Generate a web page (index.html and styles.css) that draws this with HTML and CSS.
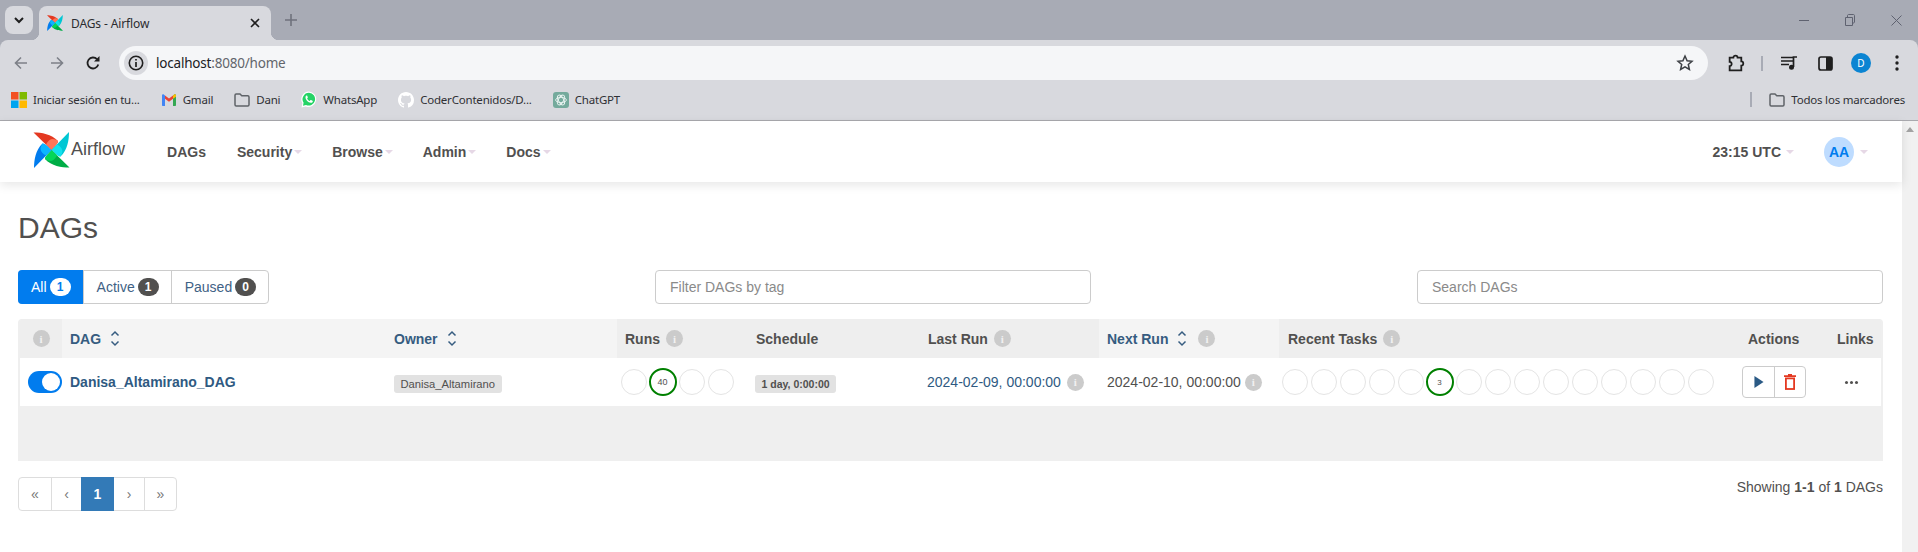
FILE: index.html
```html
<!DOCTYPE html>
<html lang="es">
<head>
<meta charset="utf-8">
<title>DAGs - Airflow</title>
<link rel="stylesheet" href="styles.css">
</head>
<body>
<svg class="defs" width="0" height="0" aria-hidden="true">
  <symbol id="pin" viewBox="0 0 36 36">
    <g id="blade-set">
      <path fill="#e43921" d="M0 0.5C8 0.5 18 2 24.5 9C24.5 12 20 15 18 18Z"/>
      <path fill="#ff7557" d="M24.5 9C20 6 16 6 12.5 12.500L18 18C20 15 24.5 12 24.5 9Z"/>
      <path fill="#00c7d4" d="M35.5 0C35.500 8 34 18 27 24.500C24 24.500 21 20 18 18Z"/>
      <path fill="#11e1ee" d="M27 24.500C30 20 30 16 23.500 12.500L18 18C21 20 24 24.500 27 24.500Z"/>
      <path fill="#00ad46" d="M36 35.500C28 35.500 18 34 11.500 27C11.500 24 16 21 18 18Z"/>
      <path fill="#04d659" d="M11.500 27C16 30 20 30 23.500 23.500L18 18C16 21 11.500 24 11.500 27Z"/>
      <path fill="#017cee" d="M0.500 36C0.500 28 2 18 9 11.500C12 11.500 15 16 18 18Z"/>
      <path fill="#0cb6ff" d="M9 11.500C6 16 6 20 12.500 23.500L18 18C15 16 12 11.500 9 11.500Z"/>
    </g>
  </symbol>
  <symbol id="folder" viewBox="0 0 16 14">
    <path fill="none" stroke="#5f6368" stroke-width="1.500" d="M1 2.200C1 1.500 1.500 1 2.200 1H6L7.800 2.800H13.800C14.500 2.800 15 3.300 15 4V11.800C15 12.500 14.500 13 13.800 13H2.200C1.500 13 1 12.500 1 11.800Z"/>
  </symbol>
  <symbol id="sort" viewBox="0 0 10 17">
    <path fill="none" stroke="currentColor" stroke-width="1.500" d="M1.500 5.500L5 2L8.500 5.500M1.500 11.500L5 15L8.500 11.500"/>
  </symbol>
</svg>

<header class="browser">
  <div class="tabstrip">
    <button class="tab-search" aria-label="Buscar pestañas">
      <svg width="12" height="12" viewBox="0 0 12 12"><path fill="none" stroke="#1f1f1f" stroke-width="2" d="M2 4L6 8L10 4"/></svg>
    </button>
    <div class="tab">
      <svg class="favicon" width="16" height="16"><use href="#pin"/></svg>
      <span class="tab-title">DAGs - Airflow</span>
      <svg class="tab-close" width="10" height="10" viewBox="0 0 10 10"><path stroke="#1f1f1f" stroke-width="1.600" d="M1 1L9 9M9 1L1 9"/></svg>
    </div>
    <svg class="new-tab" width="12" height="12" viewBox="0 0 12 12"><path stroke="#6f727c" stroke-width="1.600" d="M6 0V12M0 6H12"/></svg>
    <div class="window-controls">
      <svg width="10" height="10" viewBox="0 0 10 10"><path stroke="#5f6270" d="M0 5.500H10"/></svg>
      <svg width="10" height="12" viewBox="0 0 10 12"><path fill="none" stroke="#5f6270" d="M.5 3.500H7.500V11.500H.5ZM2.500 3.500V1.500C2.500 1 3 .5 3.500 .5H8.500C9 .5 9.500 1 9.500 1.500V8C9.500 8.500 9 9 8.500 9H7.500"/></svg>
      <svg width="11" height="11" viewBox="0 0 11 11"><path stroke="#5f6270" d="M.5 .5L10.500 10.500M10.500 .5L.5 10.500"/></svg>
    </div>
  </div>

  <div class="toolbar">
    <span class="tool"><svg width="16" height="16" viewBox="0 0 16 16"><path fill="none" stroke="#7d8088" stroke-width="1.600" d="M14 8H2.500M8 2.500L2.500 8L8 13.500"/></svg></span>
    <span class="tool"><svg width="16" height="16" viewBox="0 0 16 16"><path fill="none" stroke="#7d8088" stroke-width="1.600" d="M2 8H13.500M8 2.500L13.500 8L8 13.500"/></svg></span>
    <span class="tool"><svg width="16" height="16" viewBox="0 0 16 16"><path fill="none" stroke="#1f1f1f" stroke-width="1.800" d="M13.300 9.500A5.500 5.500 0 1 1 12 4.200"/><path fill="#1f1f1f" d="M14.500 1V6.500H9Z"/></svg></span>
    <div class="omnibox">
      <span class="site-info">
        <svg width="16" height="16" viewBox="0 0 16 16"><circle cx="8" cy="8" r="6.700" fill="none" stroke="#1f1f1f" stroke-width="1.600"/><path stroke="#1f1f1f" stroke-width="1.700" d="M8 7V12M8 4V5.600"/></svg>
      </span>
      <span class="url"><span class="url-host">localhost</span>:8080/home</span>
      <svg class="star" width="18" height="18" viewBox="0 0 18 18"><path fill="none" stroke="#3c3f44" stroke-width="1.500" d="M9 2L11.100 6.700L16 7.200L12.300 10.500L13.400 15.500L9 12.900L4.600 15.500L5.700 10.500L2 7.200L6.900 6.700Z"/></svg>
    </div>
    <span class="tool"><svg width="18" height="18" viewBox="0 0 17 17"><path fill="none" stroke="#1f1f1f" stroke-width="1.700" d="M2.500 3.500H6C6 .8 10 .8 10 3.500H13.500V7C16 7 16 11 13.500 11V15.500H2.500V11.500C5 11.500 5 7.500 2.500 7.500Z"/></svg></span>
    <span class="tool-sep"></span>
    <span class="tool"><svg width="17" height="14" viewBox="0 0 17 14"><path stroke="#1f1f1f" stroke-width="1.500" d="M0 1.500H12M0 5H12M0 8.500H8"/><path fill="none" stroke="#1f1f1f" stroke-width="1.700" d="M12.500 11V1H16"/><circle cx="10.500" cy="11.300" r="2.500" fill="#1f1f1f"/></svg></span>
    <span class="tool"><svg width="15" height="15" viewBox="0 0 15 15"><rect x="1" y="1" width="13" height="13" rx="2" fill="none" stroke="#1f1f1f" stroke-width="1.700"/><rect x="8" y="1" width="6" height="13" fill="#1f1f1f"/></svg></span>
    <span class="tool"><span class="profile">D</span></span>
    <span class="tool"><svg width="4" height="16" viewBox="0 0 4 16"><circle cx="2" cy="2" r="1.700" fill="#1f1f1f"/><circle cx="2" cy="8" r="1.700" fill="#1f1f1f"/><circle cx="2" cy="14" r="1.700" fill="#1f1f1f"/></svg></span>
  </div>

  <div class="bookmarks">
    <a class="bm">
      <svg width="16" height="16" viewBox="0 0 16 16"><rect width="7.500" height="7.500" fill="#f25022"/><rect x="8.500" width="7.500" height="7.500" fill="#7fba00"/><rect y="8.500" width="7.500" height="7.500" fill="#00a4ef"/><rect x="8.500" y="8.500" width="7.500" height="7.500" fill="#ffb900"/></svg>
      Iniciar sesión en tu...
    </a>
    <a class="bm">
      <svg width="16" height="16" viewBox="0 0 16 16"><path fill="#4285f4" d="M1 3.500C1 2.500 2.200 2 3 2.700L4 3.500V14H2C1.400 14 1 13.600 1 13Z"/><path fill="#34a853" d="M12 3.500L13 2.700C13.800 2 15 2.500 15 3.500V13C15 13.600 14.600 14 14 14H12Z"/><path fill="#ea4335" d="M4 3.500L8 6.600L12 3.500V6.800L8 9.800L4 6.800Z"/><path fill="#fbbc04" d="M12 3.500L13 2.700C13.800 2 15 2.500 15 3.500V4.800L12 6.800Z"/></svg>
      Gmail
    </a>
    <a class="bm"><svg width="16" height="14"><use href="#folder"/></svg>Dani</a>
    <a class="bm">
      <svg width="16" height="17" viewBox="0 0 16 17"><path fill="#fff" d="M8 .5A7.700 7.700 0 0 0 1.400 12.200L.5 16.500L4.800 15.400A7.700 7.700 0 1 0 8 .5Z"/><path fill="#25d366" d="M8 1.800A6.400 6.400 0 0 0 2.600 11.700L2 14.700L5 14A6.400 6.400 0 1 0 8 1.800Z"/><path fill="#fff" d="M5.600 4.500C5 4.700 4.400 5.500 4.500 6.500C4.700 8.800 7.300 11.600 9.800 11.800C10.800 11.900 11.700 11.200 11.800 10.500C11.900 10 11.800 9.800 11.500 9.700L10 9C9.700 8.900 9.500 9 9.300 9.300L8.900 9.800C8.700 10 8.500 10 8.300 9.900C7.400 9.500 6.700 8.800 6.200 7.800C6.100 7.600 6.200 7.400 6.300 7.300L6.700 6.800C6.800 6.600 6.800 6.400 6.800 6.300L6.200 4.800C6.100 4.500 5.900 4.400 5.600 4.500Z"/></svg>
      WhatsApp
    </a>
    <a class="bm">
      <svg width="16" height="16" viewBox="0 0 16 16"><path fill="#fff" d="M8 0C3.580 0 0 3.580 0 8c0 3.540 2.290 6.530 5.470 7.590.4.070.55-.170.55-.380 0-.190-.010-.820-.010-1.490-2.010.370-2.530-.490-2.690-.940-.090-.230-.480-.940-.820-1.130-.280-.150-.680-.520-.010-.530.630-.010 1.080.580 1.230.820.720 1.210 1.870.870 2.330.660.070-.520.280-.870.510-1.070-1.780-.200-3.640-.890-3.640-3.950 0-.870.310-1.590.820-2.150-.080-.200-.360-1.020.080-2.120 0 0 .670-.210 2.200.820.640-.180 1.320-.270 2-.270.680 0 1.360.090 2 .270 1.530-1.040 2.200-.820 2.200-.820.440 1.100.160 1.920.080 2.120.510.560.820 1.270.820 2.150 0 3.070-1.870 3.750-3.650 3.950.290.250.540.730.540 1.480 0 1.070-.010 1.930-.010 2.200 0 .210.150.460.550.380A8.013 8.013 0 0016 8c0-4.420-3.580-8-8-8z"/></svg>
      CoderContenidos/D...
    </a>
    <a class="bm">
      <svg width="16" height="16" viewBox="0 0 16 16"><rect width="16" height="16" rx="3" fill="#74aa9c"/><g fill="none" stroke="#e8f3f0" stroke-width=".9"><ellipse cx="8" cy="8" rx="5.400" ry="2.600"/><ellipse cx="8" cy="8" rx="5.400" ry="2.600" transform="rotate(60 8 8)"/><ellipse cx="8" cy="8" rx="5.400" ry="2.600" transform="rotate(120 8 8)"/></g></svg>
      ChatGPT
    </a>
    <span class="bm-sep"></span>
    <a class="bm"><svg width="16" height="14"><use href="#folder"/></svg>Todos los marcadores</a>
  </div>
</header>

<div class="viewport">
  <div class="page">
    <nav class="navbar">
      <a class="brand">
        <svg class="brand-mark" width="37" height="36"><use href="#pin"/></svg>
        <span class="brand-name">Airflow</span>
      </a>
      <ul class="menu">
        <li class="menu-item">DAGs</li>
        <li class="menu-item">Security<i class="caret"></i></li>
        <li class="menu-item">Browse<i class="caret"></i></li>
        <li class="menu-item">Admin<i class="caret"></i></li>
        <li class="menu-item">Docs<i class="caret"></i></li>
      </ul>
      <div class="nav-right">
        <span class="clock">23:15 UTC<i class="caret"></i></span>
        <span class="avatar">AA</span><i class="caret"></i>
      </div>
    </nav>

    <main class="content">
      <h1 class="title">DAGs</h1>

      <div class="filters">
        <div class="status-group">
          <a class="status active">All <span class="count count-light">1</span></a>
          <a class="status">Active <span class="count">1</span></a>
          <a class="status">Paused <span class="count">0</span></a>
        </div>
        <input class="field field-tag" placeholder="Filter DAGs by tag">
        <input class="field" placeholder="Search DAGs">
      </div>

      <section class="dag-table">
        <div class="row head">
          <div class="cell dim center"><span class="info">i</span></div>
          <div class="cell lite link">DAG <svg class="sort" width="10" height="17"><use href="#sort"/></svg></div>
          <div class="cell lite link">Owner <svg class="sort" width="10" height="17"><use href="#sort"/></svg></div>
          <div class="cell dim runs-head">Runs <span class="info">i</span></div>
          <div class="cell dim">Schedule</div>
          <div class="cell dim">Last Run <span class="info">i</span></div>
          <div class="cell lite link">Next Run <svg class="sort" width="10" height="17"><use href="#sort"/></svg> <span class="info">i</span></div>
          <div class="cell dim tasks-head">Recent Tasks <span class="info">i</span></div>
          <div class="cell dim">Actions</div>
          <div class="cell dim">Links</div>
        </div>
        <div class="row body">
          <div class="cell toggle-cell"><span class="toggle"><span class="knob"></span></span></div>
          <div class="cell"><a class="dag-name">Danisa_Altamirano_DAG</a></div>
          <div class="cell"><span class="pill pill-owner">Danisa_Altamirano</span></div>
          <div class="cell circles runs">
            <span class="dot"></span><span class="dot ok">40</span><span class="dot"></span><span class="dot"></span>
          </div>
          <div class="cell schedule"><span class="pill pill-bold">1 day, 0:00:00</span></div>
          <div class="cell date-cell"><a class="date link-date">2024-02-09, 00:00:00</a><span class="info">i</span></div>
          <div class="cell date-cell"><span class="date">2024-02-10, 00:00:00</span><span class="info">i</span></div>
          <div class="cell circles tasks">
            <span class="dot"></span><span class="dot"></span><span class="dot"></span><span class="dot"></span><span class="dot"></span>
            <span class="dot ok small">3</span>
            <span class="dot"></span><span class="dot"></span><span class="dot"></span><span class="dot"></span><span class="dot"></span><span class="dot"></span><span class="dot"></span><span class="dot"></span><span class="dot"></span>
          </div>
          <div class="cell actions">
            <div class="action-group">
              <span class="action"><svg width="10" height="12" viewBox="0 0 11 13"><path fill="#2b5a85" d="M.5 0L10.500 6.500L.5 13Z"/></svg></span>
              <span class="action"><svg width="12" height="16" viewBox="0 0 12 16"><path fill="#e43921" d="M4 0H8V1.200H12V3H0V1.200H4Z"/><rect x="1.900" y="4.400" width="8.200" height="10.600" fill="none" stroke="#e43921" stroke-width="1.800"/></svg></span>
            </div>
          </div>
          <div class="cell more"><span class="ellipsis"><i></i><i></i><i></i></span></div>
        </div>
        <div class="table-foot"></div>
      </section>

      <div class="pager-row">
        <ul class="pager">
          <li>«</li><li class="narrow">‹</li><li class="current">1</li><li class="narrow">›</li><li>»</li>
        </ul>
        <p class="showing">Showing <b>1-1</b> of <b>1</b> DAGs</p>
      </div>
    </main>
  </div>
  <aside class="scrollbar"><i class="scroll-up"></i></aside>
</div>
</body>
</html>
```

FILE: styles.css
```css
* { box-sizing: border-box; }
html, body { margin: 0; height: 552px; overflow: hidden; background: #fff; }
body { font-family: "Liberation Sans", Arial, sans-serif; font-size: 14px; color: #51504f; }
.defs { position: absolute; }
ul { list-style: none; margin: 0; padding: 0; }

/* Browser chrome */
.browser { font-family: "Noto Sans", "Open Sans", sans-serif; background: #a8abb5; }
.tabstrip { display: flex; align-items: flex-start; height: 40px; padding: 6px 0 0 5px; }
.tab-search { width: 28px; height: 28px; display: flex; align-items: center; justify-content: center; padding: 0; border: 0; border-radius: 8px; background: #d8d9de; }
.tab { position: relative; display: flex; align-items: center; width: 232px; height: 34px; margin-left: 6px; padding: 0 11px 0 8px; background: #d8d9de; border-radius: 8px 8px 0 0; }
.tab::before, .tab::after { content: ""; position: absolute; bottom: 0; width: 8px; height: 8px; }
.tab::before { left: -8px; background: radial-gradient(circle at 0 0, transparent 8px, #d8d9de 8.500px); }
.tab::after { right: -8px; background: radial-gradient(circle at 100% 0, transparent 8px, #d8d9de 8.500px); }
.favicon { flex: none; }
.tab-title { margin-left: 8px; flex: 1; font-size: 12px; letter-spacing: -.12px; color: #2b2c30; }
.new-tab { margin: 8px 0 0 14px; }
.window-controls { display: flex; align-items: center; margin: 8px 16px 0 auto; gap: 36px; }

.toolbar { display: flex; align-items: center; height: 44px; padding: 6px 3px 4px; background: #d8d9de; border-radius: 8px 8px 0 0; }
.tool { flex: none; width: 36px; height: 34px; display: flex; align-items: center; justify-content: center; }
.tool-sep { flex: none; width: 2px; height: 15px; margin: 0 8px 0 7px; background: #a8abb5; }
.omnibox { flex: 1; display: flex; align-items: center; height: 34px; margin: 0 10px 0 8px; padding: 0 14px 0 5px; border-radius: 17px; background: #f5f6f8; }
.site-info { width: 24px; height: 24px; display: flex; align-items: center; justify-content: center; border-radius: 50%; background: #d8d9de; }
.url { margin-left: 8px; font-size: 13.500px; letter-spacing: -.2px; color: #62656b; }
.url-host { color: #202124; }
.star { margin-left: auto; }
.profile { width: 20px; height: 20px; display: flex; align-items: center; justify-content: center; border-radius: 50%; background: #0b84d2; color: #fff; font-size: 10px; }

.bookmarks { display: flex; align-items: center; gap: 21px; height: 37px; padding: 0 13px 5px 11px; background: #d8d9de; border-bottom: 1px solid #a9a9ae; }
.bm { display: flex; align-items: center; gap: 6px; font-size: 11.500px; letter-spacing: -.2px; color: #2f3034; white-space: nowrap; }
.bm-sep { width: 2px; height: 15px; margin-left: auto; margin-right: -4px; background: #a8abb5; }

/* Page */
.viewport { display: flex; height: 431px; background: #fff; }
.page { flex: 1; min-width: 0; }
.scrollbar { flex: none; width: 16px; background: #f1f1f1; padding: 6px 3px 0; }
.scroll-up { display: block; width: 0; height: 0; margin: 0 auto; border: 4px solid transparent; border-top: 0; border-bottom: 5px solid #a3a3a3; }

.navbar { position: relative; display: flex; align-items: center; height: 61px; padding: 0 34px 0 33px; background: #fff; box-shadow: 0 3px 10px rgba(0, 0, 0, .1); }
.brand { display: flex; align-items: center; margin-top: -4px; }
.brand-name { margin-left: 1px; font-size: 18px; color: #51504f; }
.menu { display: flex; margin: 0 0 0 27px; }
.menu-item { padding: 0 15px; font-weight: 700; font-size: 14px; display: flex; align-items: center; }
.menu-item:nth-child(2) { margin-left: 1px; }
.caret { display: inline-block; width: 0; height: 0; margin-left: 2px; border-style: solid; border-width: 4px 4px 0; border-color: #e6d8e6 transparent transparent; }
.nav-right { display: flex; align-items: center; margin-left: auto; font-weight: 700; }
.clock { display: flex; align-items: center; margin-right: 30px; }
.clock .caret { margin-left: 5px; }
.avatar { width: 30px; height: 30px; display: flex; align-items: center; justify-content: center; border-radius: 50%; background: #bedcff; color: #017cee; }
.avatar + .caret { margin-left: 6px; }

.content { padding: 29px 19px 0 18px; }
.title { margin: 0 0 26px; font-size: 30px; line-height: 33px; font-weight: 400; }

.filters { display: grid; grid-template-columns: 637px 762px 466px; align-items: start; margin-bottom: 15px; }
.status-group { display: inline-flex; width: max-content; border: 1px solid #ccc; border-radius: 4px; height: 34px; }
.status { display: flex; align-items: center; gap: 3px; padding: 0 12px 0 13px; color: #3f6285; border-left: 1px solid #ccc; }
.status:first-child { border-left: 0; }
.status.active { margin: -1px 0 -1px -1px; background: #017cee; color: #fff; border-radius: 4px 0 0 4px; }
.count { min-width: 21px; height: 18px; padding: 0 7px; border-radius: 9px; background: #51504f; color: #fff; font-size: 12px; font-weight: 700; line-height: 18px; text-align: center; }
.count-light { background: #fff; color: #017cee; }
.field { height: 34px; padding: 0 14px; border: 1px solid #ccc; border-radius: 4px; font: 14px "Liberation Sans", Arial, sans-serif; color: #51504f; background: #fff; }
.field::placeholder { color: #8a8a8a; opacity: 1; }
.field-tag { width: 436px; }

.dag-table { border: 2px solid #efefef; border-width: 0 2px; border-radius: 4px 4px 0 0; background: #efefef; overflow: hidden; }
.row { display: grid; grid-template-columns: 42px 324px 231px 131px 172px 179px 180px 461px 89px 52px; }
.head { height: 39px; font-weight: 700; }
.body { height: 48px; background: #fff; }
.cell { display: flex; align-items: center; gap: 0; padding: 0 8px; white-space: nowrap; }
.center { justify-content: center; padding: 0; }
.dim { background: #eee; }
.lite { background: #f4f4f4; }
.link { color: #365c80; }
.runs-head { padding-left: 8px; }
.tasks-head { padding-left: 9px; }
.sort { margin-left: 9px; flex: none; }
.info { display: inline-flex; align-items: center; justify-content: center; flex: none; width: 17px; height: 17px; margin-left: 6px; border-radius: 50%; background: #cbcbcb; color: #f1f1f1; font: 700 11px "Liberation Serif", serif; }
.center .info { margin-left: 0; }
.head .cell:nth-child(7) .info { margin-left: 11px; }

.toggle-cell { padding: 0 0 0 8px; }
.toggle { display: flex; justify-content: flex-end; align-items: center; flex: none; width: 34px; height: 22px; padding-right: 2px; border-radius: 11px; background: #017cee; }
.knob { width: 18px; height: 18px; border-radius: 50%; background: #fff; }
.dag-name { font-weight: 700; color: #2f5a82; }
.pill { display: inline-block; height: 18px; margin-top: 3px; padding: 0 6.500px; border-radius: 3px; background: #e2e2e2; line-height: 18px; color: #51504f; }
.pill-owner { font-size: 11.200px; }
.pill-bold { font-size: 10.500px; font-weight: 700; }
.schedule { padding-left: 7px; }
.circles { padding: 0 0 0 1px; }
.runs { padding-left: 2px; }
.dot { flex: none; display: flex; align-items: center; justify-content: center; width: 26px; height: 26px; margin: 0 1.500px; border: 1.500px solid #e4e4e4; border-radius: 50%; background: #fff; font-size: 9px; color: #51504f; }
.dot.ok { width: 28px; height: 28px; margin: -1px .5px; border: 2px solid #008000; }
.dot.small { font-size: 8px; }
.date-cell { padding-left: 7px; padding-right: 0; }
.link-date { color: #2f5a82; }
.date-cell + .date-cell { padding-left: 8px; }
.date-cell + .date-cell .info { margin-left: 4px; }
.actions { padding: 0 0 0 2px; }
.action-group { display: flex; height: 32px; border: 1px solid #ccc; border-radius: 4px; }
.action { width: 31px; display: flex; align-items: center; justify-content: center; }
.action + .action { border-left: 1px solid #ccc; }
.more { justify-content: center; padding: 0 8px 0 0; }
.ellipsis { display: flex; gap: 2px; }
.ellipsis i { width: 3px; height: 3px; border-radius: 50%; background: #51504f; }
.table-foot { height: 55px; }

.pager-row { display: flex; justify-content: space-between; align-items: flex-start; margin-top: 16px; }
.pager { display: flex; height: 34px; border: 1px solid #ddd; border-radius: 4px; color: #777; }
.pager li { display: flex; align-items: center; justify-content: center; width: 32px; height: 32px; border-left: 1px solid #ddd; }
.pager li:first-child { border-left: 0; }
.pager .narrow { width: 30px; }
.pager .current { width: 33px; height: 34px; margin: -1px 0; border-left: 0; background: #337ab7; color: #fff; font-weight: 700; }
.pager .current + li { border-left: 0; }
.showing { margin: 2px 0 0; line-height: 16px; }
```
